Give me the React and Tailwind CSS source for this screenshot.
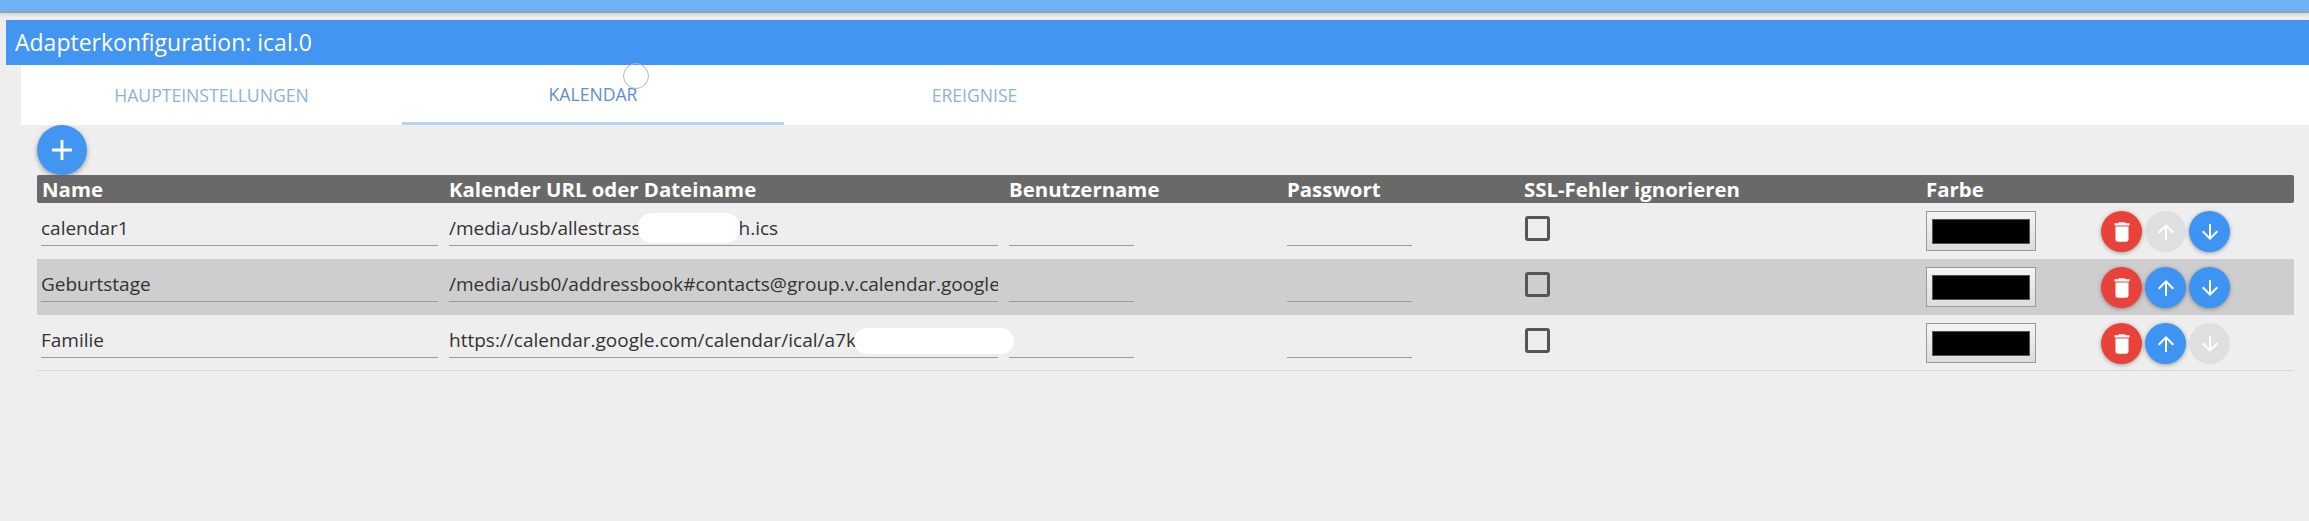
import React from 'react';
import { MdAdd, MdArrowDownward, MdArrowUpward, MdDelete } from 'react-icons/md';

const rows = [
  { name: 'calendar1', url: <>/media/usb/allestrass<span className="inline-block w-[98px]" />h.ics</>, up: false, down: true, bg: '' },
  { name: 'Geburtstage', url: '/media/usb0/addressbook#contacts@group.v.calendar.google', up: true, down: true, bg: 'bg-[#cecece]' },
  { name: 'Familie', url: 'https://calendar.google.com/calendar/ical/a7k', up: true, down: false, bg: 'border-b border-[#d8d8d8]' },
];

function RoundBtn({ on, children, color }) {
  return (
    <div className={`w-[41px] h-[41px] rounded-full flex items-center justify-center ${color} ${on ? 'shadow-[0_1px_4px_rgba(0,0,0,0.35)]' : ''}`}>
      {children}
    </div>
  );
}

function Field({ className, children }) {
  return (
    <div className={`h-[43px] border-b border-[#9a9a9a] text-[19px] leading-[50px] text-[#333] whitespace-pre overflow-hidden ${className}`}>
      {children}
    </div>
  );
}

function Row({ row }) {
  return (
    <div className={`flex h-[56px] ${row.bg}`}>
      <div className="w-[407px] pl-[4px] pr-[6px]"><Field>{row.name}</Field></div>
      <div className="w-[560px] pl-[5px] pr-[6px]"><Field>{row.url}</Field></div>
      <div className="w-[278px] pl-[5px]"><Field className="w-[125px]" /></div>
      <div className="w-[237px] pl-[5px]"><Field className="w-[125px]" /></div>
      <div className="w-[402px] pl-[6px] pt-[13px]">
        <div className="w-[25px] h-[25px] border-[3px] border-[#555] rounded-[3px]" />
      </div>
      <div className="w-[120px] pl-[5px] pt-[8px]">
        <div className="w-[110px] h-[40px] border border-[#999] bg-gradient-to-b from-[#f4f4f4] to-[#dcdcdc] px-[5px] pt-[7px]">
          <div className="h-[25px] bg-black border border-[#555]" />
        </div>
      </div>
      <div className="flex-1 flex gap-[3px] pl-[60px] pt-[8px]">
        <RoundBtn on color="bg-[#e8433a]"><MdDelete size={26} color="white" /></RoundBtn>
        <RoundBtn on={row.up} color={row.up ? 'bg-[#3d94f2]' : 'bg-[#dfdfdf]'}><MdArrowUpward size={24} color="white" /></RoundBtn>
        <RoundBtn on={row.down} color={row.down ? 'bg-[#3d94f2]' : 'bg-[#dfdfdf]'}><MdArrowDownward size={24} color="white" /></RoundBtn>
      </div>
    </div>
  );
}

const headers = [
  ['Name', 'w-[407px] pl-[5px]'],
  ['Kalender URL oder Dateiname', 'w-[560px] pl-[5px]'],
  ['Benutzername', 'w-[278px] pl-[5px]'],
  ['Passwort', 'w-[237px] pl-[5px]'],
  ['SSL-Fehler ignorieren', 'w-[402px] pl-[5px]'],
  ['Farbe', 'w-[120px] pl-[5px]'],
  ['', 'flex-1'],
];

export default function App() {
  return (
    <div className="relative w-[2309px] h-[521px] overflow-hidden bg-[#eeeeee] font-['Open_Sans','Noto_Sans',sans-serif]">
      <div className="h-[13px] bg-[#6fb1f5] border-b-[2px] border-[#86a6bd] shadow-[0_2px_3px_rgba(0,0,0,0.12)]" />
      <div className="mt-[7px] ml-[6px] h-[45px] bg-[#4295f0] text-white text-[23px] leading-[45px] pl-[9px]">
        Adapterkonfiguration: ical.0
      </div>
      <div className="ml-[21px] h-[60px] bg-white flex">
        <div className="w-[381px] h-full flex items-center justify-center text-[17.6px] text-[#8eb0dc]">HAUPTEINSTELLUNGEN</div>
        <div className="w-[382px] h-full flex items-center justify-center pt-[2px] text-[17.6px] text-[#5c8fca] border-b-[3px] border-[#b2d3f1]">KALENDAR</div>
        <div className="w-[381px] h-full flex items-center justify-center text-[17.6px] text-[#8eb0dc]">EREIGNISE</div>
      </div>
      <div className="ml-[37px] w-[50px] h-[50px] rounded-full bg-[#4295f0] shadow-[0_2px_5px_rgba(0,0,0,0.35)] flex items-center justify-center">
        <MdAdd size={34} color="white" />
      </div>
      <div className="ml-[37px] mr-[15px]">
        <div className="flex h-[28px] bg-[#696969] rounded-[2px] text-white text-[20.4px] font-bold leading-[28px]">
          {headers.map(([label, cls]) => (
            <div key={label} className={`${cls} whitespace-nowrap`}>{label}</div>
          ))}
        </div>
        {rows.map((row) => <Row key={row.name} row={row} />)}
      </div>
      {/* paint-over blobs and cursor ring from the screenshot */}
      <div className="absolute left-[638px] top-[213px] w-[102px] h-[30px] bg-white rounded-[14px]" />
      <div className="absolute left-[854px] top-[328px] w-[160px] h-[26px] bg-white rounded-[13px]" />
      <div className="absolute left-[623px] top-[63px] w-[26px] h-[26px] rounded-full border-[1.5px] border-[#b4b4b4]" />
    </div>
  );
}
